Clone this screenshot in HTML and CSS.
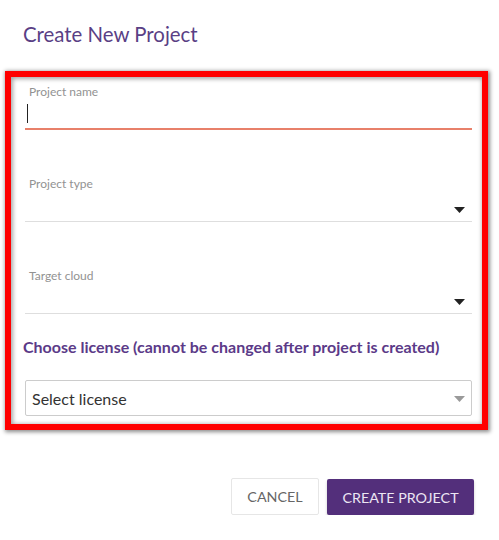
FILE: index.html
```html
<!DOCTYPE html>
<html lang="en">
<head>
<meta charset="utf-8">
<title>Create New Project</title>
<link rel="stylesheet" href="styles.css">
</head>
<body>
<div class="dialog">
  <h1 class="title">Create New Project</h1>
  <div class="highlight">
    <div class="field field-focused">
      <label class="field-label">Project name</label>
      <div class="field-input"><span class="caret"></span></div>
    </div>
    <div class="field">
      <label class="field-label">Project type</label>
      <div class="field-input field-select">
        <svg class="arrow" width="11" height="6" viewBox="0 0 11 6"><path d="M0 0H11L5.5 6Z" fill="#222"/></svg>
      </div>
    </div>
    <div class="field">
      <label class="field-label">Target cloud</label>
      <div class="field-input field-select">
        <svg class="arrow" width="11" height="6" viewBox="0 0 11 6"><path d="M0 0H11L5.5 6Z" fill="#222"/></svg>
      </div>
    </div>
    <h2 class="license-heading">Choose license (cannot be changed after project is created)</h2>
    <div class="license-select">
      <span class="license-text">Select license</span>
      <svg class="arrow-gray" width="11" height="6" viewBox="0 0 11 6"><path d="M0 0H11L5.5 6Z" fill="#9a9a9a"/></svg>
    </div>
  </div>
  <div class="actions">
    <button class="btn btn-cancel">Cancel</button>
    <button class="btn btn-primary">Create project</button>
  </div>
</div>
</body>
</html>
```

FILE: styles.css
```css
* { box-sizing: border-box; }
html, body {
  margin: 0;
  padding: 0;
  background: #ffffff;
  font-family: Lato, "Open Sans", "Liberation Sans", sans-serif;
}
.dialog {
  width: 499px;
  padding-top: 22px;
}
.title {
  margin: 0 0 0 23px;
  font-size: 20.4px;
  line-height: 24px;
  font-weight: 400;
  color: #5a3f85;
}
.highlight {
  margin: 25px 0 0 5px;
  width: 483px;
  border: 6px solid #ff0000;
  padding: 8px 10px 8px 12px;
  box-shadow: 1px 1px 4px 1px rgba(0, 0, 0, 0.45), inset 1px 1px 4px 1px rgba(0, 0, 0, 0.35);
}
.field {
  margin-left: 2px;
  display: flex;
  flex-direction: column;
}
.field + .field { margin-top: 47px; }
.field-label {
  display: block;
  padding-left: 4px;
  font-size: 12px;
  line-height: 14px;
  color: #929292;
}
.field-input {
  height: 31px;
  border-bottom: 1px solid #dedede;
  display: flex;
}
.field-focused .field-input {
  height: 31px;
  border-bottom: 2px solid #e8806a;
  padding: 5px 0 0 2px;
}
.caret {
  width: 1px;
  height: 19px;
  background: #222;
}
.field-select {
  justify-content: flex-end;
  align-items: flex-end;
  padding: 0 7px 8px 0;
}
.license-heading {
  margin: 24px 0 0 0;
  font-size: 16px;
  line-height: 18px;
  font-weight: 700;
  color: #5b3a88;
}
.license-select {
  margin: 24px 0 0 2px;
  height: 36px;
  border: 1px solid #cccccc;
  border-radius: 2px;
  display: flex;
  align-items: center;
  justify-content: space-between;
  padding: 0 6px 0 6px;
}
.license-text {
  font-size: 16px;
  color: #333333;
}
.arrow-gray { margin-top: 1px; }
.actions {
  margin-top: 48px;
  display: flex;
  justify-content: flex-end;
  align-items: flex-end;
  gap: 8px;
  padding-right: 25px;
}
.btn {
  font-family: Lato, "Open Sans", "Liberation Sans", sans-serif;
  font-size: 14.3px;
  text-transform: uppercase;
  border-radius: 2px;
  cursor: pointer;
}
.btn-cancel {
  width: 88px;
  height: 37px;
  background: #ffffff;
  border: 1px solid #e6e6e6;
  color: #666666;
}
.btn-primary {
  width: 147px;
  height: 36px;
  background: #532f7b;
  border: none;
  color: #ece6f3;
  box-shadow: 0 2px 3px rgba(0, 0, 0, 0.2);
}
```
